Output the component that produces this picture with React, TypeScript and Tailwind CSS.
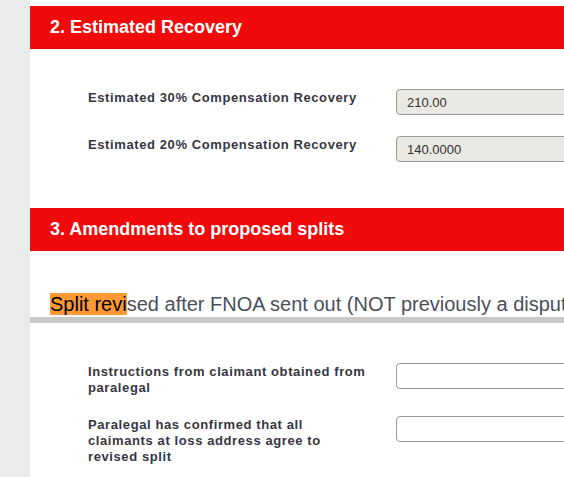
export default function App() {
  const label = 'w-[280px] shrink-0 pt-[1px] text-[13px] font-bold leading-4 tracking-[0.6px] text-[#36363f]';
  const input = 'h-[26px] w-[220px] shrink-0 rounded-[4px] border border-[#9a9a9a] px-[10px] text-[13px] text-[#333] outline-none';

  return (
    <div
      className="flex h-[477px] w-[564px] overflow-hidden bg-white"
      style={{ fontFamily: '"Liberation Sans", Arial, sans-serif' }}
    >
      <div className="w-[30px] shrink-0 bg-[#ebebeb]" />
      <div className="min-w-0 flex-1 pt-[6px]">
        <div className="flex h-[43px] items-center bg-[#f00a0a] pl-5 text-[18px] font-bold text-white">
          2. Estimated Recovery
        </div>
        <div className="flex flex-col gap-[21px] pl-[58px] pt-10">
          <div className="flex items-start gap-7">
            <p className={label}>Estimated 30% Compensation Recovery</p>
            <input readOnly value="210.00" className={`${input} bg-[#e9e8e2]`} />
          </div>
          <div className="flex items-start gap-7">
            <p className={label}>Estimated 20% Compensation Recovery</p>
            <input readOnly value="140.0000" className={`${input} bg-[#e9e8e2]`} />
          </div>
        </div>

        <div className="mt-[46px] flex h-[43px] items-center bg-[#f00a0a] pl-5 text-[18px] font-bold text-white">
          3. Amendments to proposed splits
        </div>
        <div className="overflow-hidden pl-5 pt-[42px]">
          <p className="whitespace-nowrap text-[20px] leading-[22px] text-[#4a4f5c]">
            <span className="bg-[#ff9933] text-black">Split revi</span>sed after FNOA sent out (NOT previously a dispute)
          </p>
        </div>
        <div className="mt-[2px] h-[6px] bg-[#c8c8c8]" />
        <div className="flex flex-col gap-5 pl-[58px] pt-10">
          <div className="flex items-start gap-7">
            <p className={label}>Instructions from claimant obtained from paralegal</p>
            <input className={`${input} bg-white`} />
          </div>
          <div className="flex items-start gap-7">
            <p className={label}>Paralegal has confirmed that all claimants at loss address agree to revised split</p>
            <input className={`${input} bg-white`} />
          </div>
        </div>
      </div>
    </div>
  );
}
